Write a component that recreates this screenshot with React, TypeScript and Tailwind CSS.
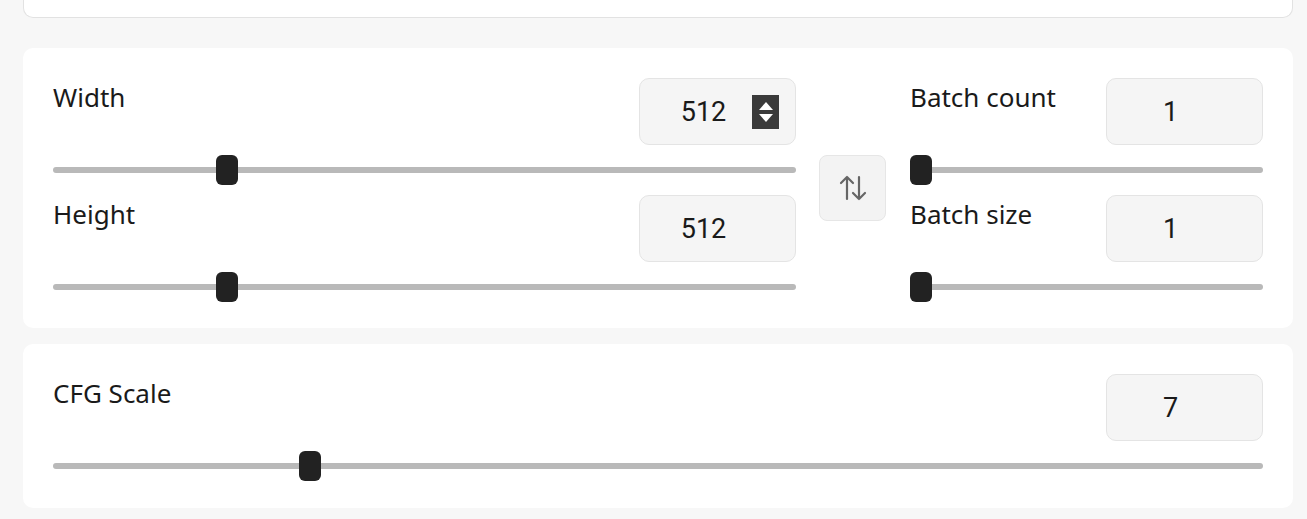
import React from "react";

const Slider = ({ value, min, max }: { value: number; min: number; max: number }) => {
  const pct = (value - min) / (max - min);
  return (
    <div className="relative h-[30px] w-full">
      <div className="absolute left-0 right-0 top-[12px] h-[6px] rounded-full bg-[#b9b9b9]" />
      <div
        className="absolute top-0 h-[30px] w-[22px] rounded-[6px] bg-[#222222]"
        style={{ left: `calc((100% - 22px) * ${pct})` }}
      />
    </div>
  );
};

const NumberBox = ({ value, spinner }: { value: number; spinner?: boolean }) => (
  <div className="relative flex h-[67px] w-[157px] shrink-0 items-center justify-center rounded-[10px] border border-[#e4e4e4] bg-[#f5f5f5] pr-[28px] pt-[2px] font-['Roboto',sans-serif] text-[27px] text-[#1a1a1a]">
    {value}
    {spinner && (
      <div className="absolute right-[16px] top-[16px] flex h-[34px] w-[27px] flex-col items-center justify-center gap-[4px] bg-[#3a3a3a]">
        <svg width="14" height="8" viewBox="0 0 14 8">
          <path d="M7 0L14 8H0Z" fill="#fff" />
        </svg>
        <svg width="14" height="8" viewBox="0 0 14 8">
          <path d="M0 0H14L7 8Z" fill="#fff" />
        </svg>
      </div>
    )}
  </div>
);

const Label = ({ children }: { children: React.ReactNode }) => (
  <span className="pt-[2px] text-[26px] leading-[34px] text-[#1a1a1a]">{children}</span>
);

const Field = ({
  label,
  value,
  min,
  max,
  spinner,
}: {
  label: string;
  value: number;
  min: number;
  max: number;
  spinner?: boolean;
}) => (
  <div className="flex flex-col gap-[10px]">
    <div className="flex items-start justify-between">
      <Label>{label}</Label>
      <NumberBox value={value} spinner={spinner} />
    </div>
    <Slider value={value} min={min} max={max} />
  </div>
);

export default function App() {
  return (
    <div className="min-h-[519px] bg-[#f7f7f7] pl-[23px] pr-[14px] font-['Noto_Sans',sans-serif]">
      {/* cut-off card above */}
      <div className="h-[18px] rounded-b-[10px] border-x border-b border-[#e2e2e2] bg-white" />

      {/* size panel */}
      <div className="mt-[30px] flex items-center rounded-[10px] bg-white px-[30px] pb-[26px] pt-[30px]">
        <div className="flex w-[743px] flex-col gap-[10px]">
          <Field label="Width" value={512} min={64} max={2048} spinner />
          <Field label="Height" value={512} min={64} max={2048} />
        </div>
        <div className="flex w-[114px] justify-center">
          <button className="mb-[4px] ml-[-1px] flex h-[66px] w-[67px] items-center justify-center rounded-[8px] border border-[#e6e6e6] bg-[#f3f3f3]">
            <svg width="28" height="26" viewBox="0 0 28 26" fill="none" stroke="#666" strokeWidth="2.2" strokeLinecap="round" strokeLinejoin="round">
              <path d="M8 24V2M2 8l6-6 6 6" />
              <path d="M20 2v22M14 18l6 6 6-6" />
            </svg>
          </button>
        </div>
        <div className="flex flex-1 flex-col gap-[10px]">
          <Field label="Batch count" value={1} min={1} max={100} />
          <Field label="Batch size" value={1} min={1} max={8} />
        </div>
      </div>

      {/* cfg panel */}
      <div className="mt-[16px] rounded-[10px] bg-white px-[30px] pb-[27px] pt-[30px]">
        <div className="flex flex-col gap-[10px]">
          <div className="flex items-start justify-between">
            <Label>CFG Scale</Label>
            <NumberBox value={7} />
          </div>
          <Slider value={7} min={1} max={30} />
        </div>
      </div>
    </div>
  );
}
